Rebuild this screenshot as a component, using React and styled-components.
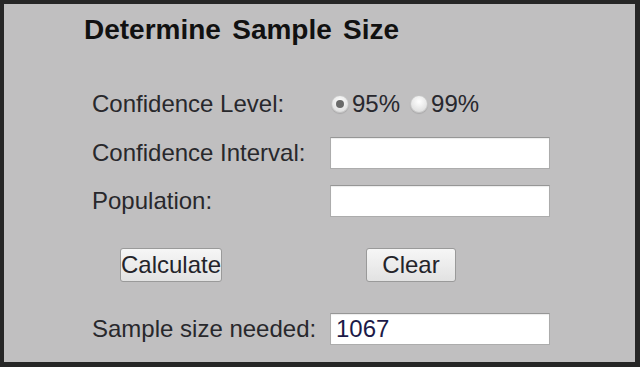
import React, { useState } from 'react';
import styled, { createGlobalStyle } from 'styled-components';

const GlobalStyle = createGlobalStyle`
  html, body {
    margin: 0;
    padding: 0;
    background: #c0bfc0;
  }
  body {
    font-family: "Liberation Sans", Arial, sans-serif;
  }
`;

const Frame = styled.div`
  box-sizing: border-box;
  width: 640px;
  height: 367px;
  background: #c0bfc0;
  border-style: solid;
  border-color: #262626;
  border-width: 4px 5px 5px 4px;
  padding: 10px 0 0 0;
  display: flex;
  flex-direction: column;
`;

const Title = styled.h1`
  margin: 0 0 42px 80px;
  font-size: 28px;
  line-height: 32px;
  font-weight: bold;
  word-spacing: 3.5px;
  color: #111;
`;

const Form = styled.div`
  display: grid;
  grid-template-columns: 238px 220px;
  padding-left: 88px;
`;

const Row = styled.div`
  display: contents;
`;

const Cell = styled.div`
  height: ${p => p.h || 32}px;
  margin-bottom: ${p => p.mb || 0}px;
  display: flex;
  align-items: center;
`;

const Label = styled.span`
  font-size: 24px;
  color: #28282c;
`;

const TextBox = styled.input`
  box-sizing: border-box;
  width: 220px;
  height: 32px;
  border: 1px solid #acacac;
  border-top-color: #969696;
  background: #fff;
  box-shadow: inset 0 1px 1px rgba(0, 0, 0, 0.08);
  font-family: "Liberation Sans", Arial, sans-serif;
  font-size: 24px;
  color: #1c1a48;
  padding: 0 5px;
  outline: none;
`;

const Radios = styled.div`
  display: flex;
  align-items: center;
  padding-left: 1px;
`;

const Radio = styled.input`
  appearance: none;
  margin: 0 3px 0 0;
  width: 18px;
  height: 18px;
  border-radius: 50%;
  border: 1px solid #c4c4c4;
  background: radial-gradient(circle at 50% 35%, #ffffff, #d6d6d6);
  box-shadow: 0 1px 1px rgba(0, 0, 0, 0.12);
  position: relative;
  &:checked::after {
    content: "";
    position: absolute;
    left: 4px;
    top: 4px;
    width: 8px;
    height: 8px;
    border-radius: 50%;
    background: #6a6a6a;
  }
`;

const RadioText = styled.span`
  font-size: 24px;
  color: #28282e;
  margin-right: ${p => p.mr || 0}px;
`;

const Button = styled.button`
  box-sizing: border-box;
  width: ${p => p.w}px;
  height: 34px;
  margin-left: ${p => p.ml || 0}px;
  padding: 0;
  border: 1px solid #9a9a9a;
  border-radius: 3px;
  background: linear-gradient(#f6f6f6, #e2e2e2);
  font-family: "Liberation Sans", Arial, sans-serif;
  font-size: 24px;
  color: #24242a;
`;

export default function App() {
  const [level, setLevel] = useState('95');
  return (
    <>
      <GlobalStyle />
      <Frame>
        <Title>Determine Sample Size</Title>
        <Form>
          <Row>
            <Cell mb={17}><Label>Confidence Level:</Label></Cell>
            <Cell mb={17}>
              <Radios>
                <Radio type="radio" name="level" checked={level === '95'} onChange={() => setLevel('95')} />
                <RadioText mr={10}>95%</RadioText>
                <Radio type="radio" name="level" checked={level === '99'} onChange={() => setLevel('99')} />
                <RadioText>99%</RadioText>
              </Radios>
            </Cell>
          </Row>
          <Row>
            <Cell mb={16}><Label>Confidence Interval:</Label></Cell>
            <Cell mb={16}><TextBox defaultValue="" /></Cell>
          </Row>
          <Row>
            <Cell mb={31}><Label>Population:</Label></Cell>
            <Cell mb={31}><TextBox defaultValue="" /></Cell>
          </Row>
          <Row>
            <Cell h={34} mb={31}><Button w={102} ml={28}>Calculate</Button></Cell>
            <Cell h={34} mb={31}><Button w={90} ml={36}>Clear</Button></Cell>
          </Row>
          <Row>
            <Cell><Label>Sample size needed:</Label></Cell>
            <Cell><TextBox defaultValue="1067" /></Cell>
          </Row>
        </Form>
      </Frame>
    </>
  );
}
